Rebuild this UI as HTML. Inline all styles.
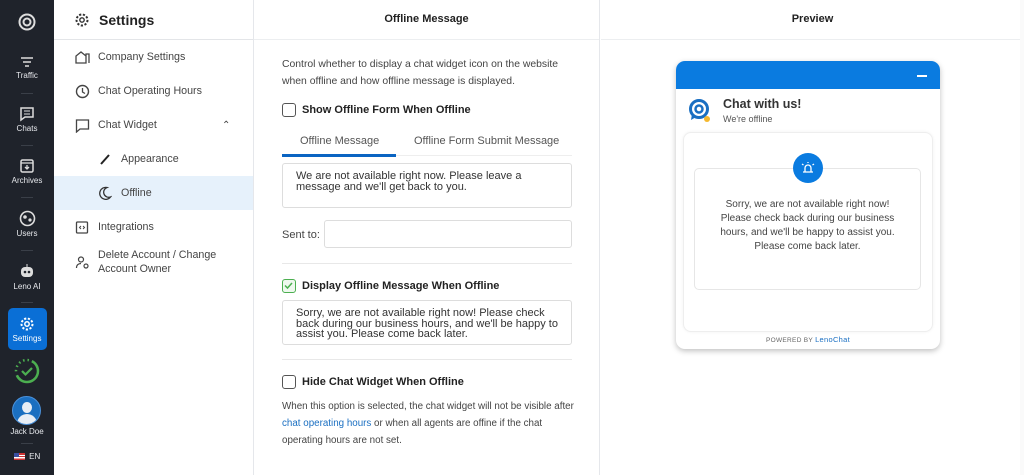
<!DOCTYPE html>
<html><head><meta charset="utf-8"><style>
*{box-sizing:border-box;margin:0;padding:0}
body{width:1024px;height:475px;overflow:hidden;font-family:"Liberation Sans",sans-serif;background:#fff;position:relative;color:#333}
.sb{position:absolute;left:0;top:0;width:54px;height:475px;background:#1f232b}
.si{position:absolute;left:0;width:54px;text-align:center;color:#e6e8ec;font-size:8px}
.si svg{display:block;margin:0 auto 2px}
.sep{position:absolute;left:21px;width:12px;height:1px;background:#3a3f48}
.nav{position:absolute;left:54px;top:0;width:200px;height:475px;border-right:1px solid #e5e7eb}
.nh{height:40px;border-bottom:1px solid #e3e5e8;display:flex;align-items:center;padding-left:20px;font-size:14px;font-weight:bold;color:#222}
.ni{position:absolute;left:0;width:199px;font-size:10.7px;color:#444;display:flex;align-items:center}
.ni svg{position:absolute}
.mid{position:absolute;left:254px;top:0;width:346px;height:475px;border-right:1px solid #e5e7eb}
.hd{height:40px;border-bottom:1px solid #eceef0;text-align:center;line-height:38px;font-size:11px;font-weight:bold;color:#222}
.t{position:absolute;font-size:11px;color:#444}
.cb{position:absolute;width:14px;height:14px;border:1.5px solid #555;border-radius:3px}
.lb{position:absolute;font-size:11px;font-weight:bold;color:#222}
.ta{position:absolute;left:28px;width:290px;border:1px solid #ddd;border-radius:3px;font-size:11px;color:#333;padding:7px 13px;line-height:10.5px}
.hr{position:absolute;left:28px;width:290px;height:1px;background:#e8e8e8}
</style></head><body>
<div class="sb">
 <div class="si" style="top:12px"><svg width="20" height="20" viewBox="0 0 20 20"><circle cx="10" cy="10" r="7.5" fill="none" stroke="#ddd" stroke-width="2"/><circle cx="10" cy="10" r="3.5" fill="none" stroke="#ddd" stroke-width="2"/></svg></div>
 <div class="si" style="top:55px"><svg width="16" height="14"><path d="M2 3h12M4 7h8M6 11h4" stroke="#ddd" stroke-width="1.6"/></svg>Traffic</div>
 <div class="sep" style="top:93px"></div>
 <div class="si" style="top:106px"><svg width="16" height="16"><path d="M2 2h12v9H6l-4 3z" fill="none" stroke="#ddd" stroke-width="1.5"/><path d="M5 5h6M5 8h6" stroke="#ddd"/></svg>Chats</div>
 <div class="sep" style="top:145px"></div>
 <div class="si" style="top:158px"><svg width="16" height="16"><rect x="2" y="2" width="12" height="12" rx="1.5" fill="none" stroke="#ddd" stroke-width="1.5"/><path d="M2 5h12M8 7v4M6 9l2 2 2-2" stroke="#ddd" stroke-width="1.3" fill="none"/></svg>Archives</div>
 <div class="sep" style="top:197px"></div>
 <div class="si" style="top:210px"><svg width="17" height="17"><circle cx="8.5" cy="8.5" r="7" fill="none" stroke="#ddd" stroke-width="1.6"/><circle cx="6" cy="7" r="1.8" fill="#ddd"/><circle cx="11" cy="10" r="1.6" fill="#ddd"/></svg>Users</div>
 <div class="sep" style="top:250px"></div>
 <div class="si" style="top:263px"><svg width="18" height="17"><rect x="3" y="4" width="12" height="10" rx="4" fill="#ddd"/><circle cx="7" cy="9" r="1.3" fill="#1f232b"/><circle cx="11" cy="9" r="1.3" fill="#1f232b"/><path d="M9 1v3" stroke="#ddd"/></svg>Leno AI</div>
 <div class="sep" style="top:302px"></div>
 <div style="position:absolute;left:8px;top:308px;width:39px;height:42px;background:#0a6fd6;border-radius:5px"></div>
 <div class="si" style="top:316px;color:#fff"><svg width="16" height="16" viewBox="0 0 16 16"><circle cx="8" cy="8" r="5.5" fill="none" stroke="#fff" stroke-width="2" stroke-dasharray="2.2 1.6"/><circle cx="8" cy="8" r="2.2" fill="none" stroke="#fff" stroke-width="1.5"/></svg>Settings</div>
 <div class="si" style="top:358px"><svg width="26" height="26"><circle cx="13" cy="13" r="11" fill="none" stroke="#4caf50" stroke-width="2.5" stroke-dasharray="30 4 1.5 3 1.5 3 1.5 3 1.5 3 1.5 3"/><path d="M8 13l3.5 3.5L18 10" stroke="#4caf50" stroke-width="2.2" fill="none"/></svg></div>
 <div style="position:absolute;left:12px;top:396px;width:29px;height:29px;border-radius:50%;background:#1b6fc0;border:1px solid #4a90d9;overflow:hidden"><div style="position:absolute;left:9px;top:5px;width:10px;height:11px;border-radius:50%;background:#e8eef5"></div><div style="position:absolute;left:4px;top:17px;width:20px;height:14px;border-radius:10px 10px 0 0;background:#e8eef5"></div></div>
 <div class="si" style="top:427px">Jack Doe</div>
 <div class="sep" style="top:443px"></div>
 <div class="si" style="top:452px"><span style="display:inline-block;width:11px;height:7px;background:linear-gradient(#c33 0 30%,#fff 30% 45%,#c33 45% 60%,#fff 60% 75%,#c33 75%);position:relative;vertical-align:middle"><span style="position:absolute;left:0;top:0;width:5px;height:4px;background:#3a4ea0"></span></span>&nbsp; EN</div>
</div>

<div class="nav">
 <div class="nh"><svg width="16" height="16" viewBox="0 0 16 16" style="margin-right:9px"><circle cx="8" cy="8" r="5.5" fill="none" stroke="#333" stroke-width="2" stroke-dasharray="2.2 1.6"/><circle cx="8" cy="8" r="2.2" fill="none" stroke="#333" stroke-width="1.4"/></svg>Settings</div>
 <div class="ni" style="top:48px;height:18px"><svg style="left:21px" width="15" height="14"><path d="M1 13V6l5-4 5 4v7zM11 13V4h3v9" fill="none" stroke="#444" stroke-width="1.3"/></svg><span style="position:absolute;left:44px">Company Settings</span></div>
 <div class="ni" style="top:82px;height:18px"><svg style="left:21px" width="15" height="15"><circle cx="7.5" cy="7.5" r="6" fill="none" stroke="#444" stroke-width="1.4"/><path d="M7.5 4v4l2.5 1.5" stroke="#444" stroke-width="1.3" fill="none"/></svg><span style="position:absolute;left:44px">Chat Operating Hours</span></div>
 <div class="ni" style="top:116px;height:18px"><svg style="left:21px" width="15" height="15"><path d="M1.5 2h12v9H5l-3.5 3z" fill="none" stroke="#444" stroke-width="1.3"/></svg><span style="position:absolute;left:44px">Chat Widget</span><span style="position:absolute;left:168px;font-size:10px">&#8963;</span></div>
 <div class="ni" style="top:150px;height:18px"><svg style="left:44px" width="14" height="14"><path d="M3 12L11 3" stroke="#222" stroke-width="2"/></svg><span style="position:absolute;left:67px">Appearance</span></div>
 <div class="ni" style="top:176px;height:34px;background:#e6f1fb"><svg style="left:44px" width="14" height="14"><path d="M9 1.5A6 6 0 1 0 12.5 11 5 5 0 0 1 9 1.5z" fill="none" stroke="#333" stroke-width="1.3"/></svg><span style="position:absolute;left:67px">Offline</span></div>
 <div class="ni" style="top:218px;height:18px"><svg style="left:21px" width="14" height="15"><rect x="1.5" y="2" width="11" height="11" rx="1" fill="none" stroke="#444" stroke-width="1.3"/><path d="M6 6L4.5 7.5 6 9M8 6l1.5 1.5L8 9" stroke="#444" fill="none"/></svg><span style="position:absolute;left:44px">Integrations</span></div>
 <div class="ni" style="top:248px;height:28px"><svg style="left:21px" width="15" height="15"><circle cx="6" cy="4.5" r="2.5" fill="none" stroke="#444" stroke-width="1.2"/><path d="M1.5 13c0-3 2-4.5 4.5-4.5" fill="none" stroke="#444" stroke-width="1.2"/><circle cx="11" cy="11" r="2" fill="none" stroke="#444" stroke-width="1.2"/></svg><span style="position:absolute;left:44px;line-height:14px;top:0">Delete Account / Change<br>Account Owner</span></div>
</div>

<div class="mid">
 <div class="hd">Offline Message</div>
 <div class="t" style="left:28px;top:56px;line-height:17px;font-size:10.4px">Control whether to display a chat widget icon on the website<br>when offline and how offline message is displayed.</div>
 <div class="cb" style="left:28px;top:103px"></div>
 <div class="lb" style="left:48px;top:104px">Show Offline Form When Offline</div>
 <div class="t" style="left:46px;top:135px;color:#555">Offline Message</div>
 <div class="t" style="left:160px;top:135px;color:#555">Offline Form Submit Message</div>
 <div style="position:absolute;left:28px;top:155px;width:290px;height:1px;background:#eee"></div>
 <div style="position:absolute;left:28px;top:154px;width:114px;height:3px;background:#0a64c2"></div>
 <div class="ta" style="top:163px;height:45px">We are not available right now. Please leave a message and we'll get back to you.</div>
 <div class="t" style="left:28px;top:229px">Sent to:</div>
 <div style="position:absolute;left:70px;top:220px;width:248px;height:28px;border:1px solid #ddd;border-radius:3px"></div>
 <div class="hr" style="top:263px"></div>
 <div class="cb" style="left:28px;top:279px;border-color:#4caf50;background:#eef8ee"><svg width="11" height="11" style="position:absolute;left:0;top:0"><path d="M2 5.5l2.5 2.5L9 3" stroke="#4caf50" stroke-width="1.5" fill="none"/></svg></div>
 <div class="lb" style="left:48px;top:280px">Display Offline Message When Offline</div>
 <div class="ta" style="top:300px;height:45px">Sorry, we are not available right now! Please check back during our business hours, and we'll be happy to assist you. Please come back later.</div>
 <div class="hr" style="top:359px"></div>
 <div class="cb" style="left:28px;top:375px"></div>
 <div class="lb" style="left:48px;top:376px">Hide Chat Widget When Offline</div>
 <div class="t" style="left:28px;top:398px;line-height:17px;font-size:9.8px;width:310px">When this option is selected, the chat widget will not be visible after<br><span style="color:#1a6fc2">chat operating hours</span> or when all agents are offine if the chat<br>operating hours are not set.</div>
</div>

<div style="position:absolute;left:601px;top:0;width:423px;height:40px;border-bottom:1px solid #eceef0;text-align:center;line-height:38px;font-size:11px;font-weight:bold;color:#222">Preview</div>
<div style="position:absolute;left:676px;top:61px;width:264px;height:288px;border-radius:9px;background:#fff;box-shadow:0 2px 6px rgba(0,0,0,.25);overflow:hidden">
 <div style="height:28px;background:#0a7be0;position:relative"><div style="position:absolute;right:13px;top:14px;width:10px;height:1.5px;background:#fff"></div></div>
 <svg width="24" height="26" style="position:absolute;left:12px;top:37px"><circle cx="11" cy="11" r="8.5" fill="none" stroke="#1a6fc2" stroke-width="3"/><circle cx="11" cy="11" r="3.5" fill="none" stroke="#1a6fc2" stroke-width="2.5"/><path d="M4 16l-1 6 5-3" fill="#1a6fc2"/><circle cx="19" cy="21" r="3" fill="#f5b82e"/></svg>
 <div style="position:absolute;left:47px;top:36px;font-size:12.5px;font-weight:bold;color:#333">Chat with us!</div>
 <div style="position:absolute;left:47px;top:53px;font-size:9px;color:#555">We're offline</div>
 <div style="position:absolute;left:7px;top:71px;width:250px;height:200px;border:1px solid #eee;border-radius:8px;box-shadow:0 0 3px rgba(0,0,0,.06)"></div>
 <div style="position:absolute;left:18px;top:107px;width:227px;height:122px;border:1px solid #e6e6e6;border-radius:5px"></div>
 <div style="position:absolute;left:117px;top:92px;width:30px;height:30px;border-radius:50%;background:#0a7be0"><svg width="30" height="30"><path d="M10 19h10M12 19v-4a3 3 0 0 1 6 0v4M9 11l1.5 1M21 11l-1.5 1M15 9v1" stroke="#fff" stroke-width="1.3" fill="none"/></svg></div>
 <div style="position:absolute;left:18px;top:137px;width:227px;text-align:center;font-size:10px;line-height:14px;color:#444">Sorry, we are not available right now!<br>Please check back during our business<br>hours, and we'll be happy to assist you.<br>Please come back later.</div>
 <div style="position:absolute;left:0;top:274px;width:264px;text-align:center;font-size:6.5px;color:#666;letter-spacing:.3px">POWERED BY <span style="color:#1a6fc2;font-size:7.5px">LenoChat</span></div>
</div>
<div style="position:absolute;left:1020px;top:0;width:4px;height:475px;background:#fafafa"></div>
</body></html>
